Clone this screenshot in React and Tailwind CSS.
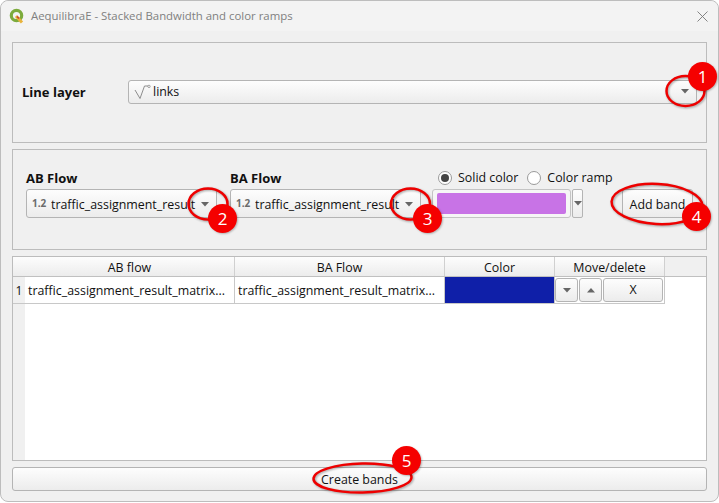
const font = "font-['Open_Sans','Liberation_Sans',sans-serif]";
const gradient = "bg-gradient-to-b from-[#fdfdfd] to-[#ececec]";

function Arrow({ up }) {
  return (
    <svg width="8" height="5" viewBox="0 0 8 5" className="shrink-0">
      <path d={up ? "M0 4.5L4 0L8 4.5Z" : "M0 0L8 0L4 4.5Z"} fill="#666" />
    </svg>
  );
}

function QgisLogo() {
  return (
    <svg width="16" height="16" viewBox="0 0 16 16">
      <circle cx="7.5" cy="7.5" r="5.2" fill="none" stroke="#7cab3c" strokeWidth="3.2" />
      <path d="M7 8L13 14.5" stroke="#e8b33a" strokeWidth="3" />
      <path d="M8 8.5l2 2" stroke="#c9402f" strokeWidth="1.6" />
    </svg>
  );
}

function CloseIcon() {
  return (
    <svg width="11" height="11" viewBox="0 0 11 11">
      <path d="M0.5 0.5L10.5 10.5M10.5 0.5L0.5 10.5" stroke="#777" strokeWidth="0.9" />
    </svg>
  );
}

function LineIcon() {
  return (
    <svg width="17" height="16" viewBox="0 0 17 16">
      <path d="M1 6L6 14.5L10.5 2L14 2" fill="none" stroke="#8d8d8d" strokeWidth="1" />
      <circle cx="15" cy="2.4" r="1.2" fill="none" stroke="#8d8d8d" strokeWidth="0.8" />
    </svg>
  );
}

function FieldCombo() {
  return (
    <div className={`w-[191px] h-[29px] flex items-center rounded-[3px] border border-[#b4b4b4] ${gradient}`}>
      <span className="ml-[5px] w-[19px] shrink-0 text-[10px] font-bold text-[#6b6b6b]">1.2</span>
      <span className="w-[147px] shrink-0 pt-[3px] overflow-hidden whitespace-nowrap text-[12.4px] text-[#111]">traffic_assignment_result</span>
      <span className="ml-[3px] pt-[1px]"><Arrow /></span>
    </div>
  );
}

function Radio({ checked, label }) {
  return (
    <label className="flex items-center gap-[6px] whitespace-nowrap">
      <span className="w-[14px] h-[14px] shrink-0 rounded-full border border-[#9a9a9a] bg-white flex items-center justify-center">
        {checked && <span className="w-[8px] h-[8px] rounded-full bg-[#444]" />}
      </span>
      <span className="text-[12.4px] text-[#111]">{label}</span>
    </label>
  );
}

function HeaderCell({ width, children }) {
  return (
    <div className={`${width} h-full pt-[3px] flex items-center justify-center border-r border-[#d0d0d0] text-[12.4px] text-[#111] ${gradient}`}>
      {children}
    </div>
  );
}

function SmallButton({ width, children }) {
  return (
    <div className={`${width} h-[24px] flex items-center justify-center rounded-[3px] border border-[#b4b4b4] ${gradient}`}>
      {children}
    </div>
  );
}

function Badge({ className, children }) {
  return (
    <div className={`absolute w-[29px] h-[29px] rounded-full bg-[#f50000] text-white text-[17px] flex items-center justify-center shadow-[1px_1px_2px_rgba(0,0,0,0.25)] ${className}`}>
      {children}
    </div>
  );
}

function Annotations() {
  const rings = [
    { cx: 685.5, cy: 91, rx: 19, ry: 15, rot: 0 },
    { cx: 208, cy: 204, rx: 19.5, ry: 15.5, rot: 0 },
    { cx: 410.5, cy: 204, rx: 19.5, ry: 15.5, rot: 0 },
    { cx: 657, cy: 204, rx: 45.5, ry: 20, rot: 3 },
    { cx: 362.5, cy: 478, rx: 49, ry: 14.5, rot: -1 },
  ];
  return (
    <svg width="719" height="503" className="absolute left-0 top-0 pointer-events-none drop-shadow-[1px_1px_1px_rgba(0,0,0,0.35)]">
      {rings.map((r, i) => (
        <ellipse
          key={i}
          cx={r.cx}
          cy={r.cy}
          rx={r.rx}
          ry={r.ry}
          transform={`rotate(${r.rot} ${r.cx} ${r.cy})`}
          fill="none"
          stroke="#ee0000"
          strokeWidth="2.5"
        />
      ))}
    </svg>
  );
}

export default function App() {
  return (
    <div className={`relative w-[719px] h-[503px] overflow-hidden bg-white ${font}`}>
      <div className="h-[502px] flex flex-col rounded-[8px] border border-[#bdbdbd] bg-[#f0f0f0]">
        {/* title bar */}
        <div className="h-[30px] shrink-0 flex items-center pl-[8px] pr-[10px] rounded-t-[8px] bg-[#f3f3f3]">
          <QgisLogo />
          <span className="ml-[6px] flex-1 text-[11.4px] text-[#808080]">AequilibraE - Stacked Bandwidth and color ramps</span>
          <CloseIcon />
        </div>

        <div className="flex-1 flex flex-col px-[11px] pt-[11px]">
          <div className="h-[101px] shrink-0 pb-[2px] flex items-center pl-[9px] pr-[9px] border border-[#bcbcbc]">
            <span className="w-[106px] pt-[2px] text-[13px] font-bold text-[#111]">Line layer</span>
            <div className={`flex-1 h-[24px] flex items-center rounded-[3px] border border-[#b4b4b4] ${gradient}`}>
              <span className="ml-[5px] mr-[2px]"><LineIcon /></span>
              <span className="flex-1 pt-[2px] text-[12.4px] text-[#111]">links</span>
              <span className="mr-[7px]"><Arrow /></span>
            </div>
          </div>

          <div className="h-[101px] shrink-0 mt-[6px] flex pl-[13px] pr-[13px] pt-[19px] border border-[#bcbcbc]">
            <div className="w-[204px] shrink-0">
              <div className="h-[20px] text-[13px] font-bold text-[#111]">AB Flow</div>
              <FieldCombo />
            </div>
            <div className="w-[202px] shrink-0">
              <div className="h-[20px] text-[13px] font-bold text-[#111]">BA Flow</div>
              <FieldCombo />
            </div>
            <div className="w-[151px] shrink-0 -mt-[9px]">
              <div className="h-[29px] pt-[7px] flex items-center gap-[9px] pl-[6px]">
                <Radio checked label="Solid color" />
                <Radio label="Color ramp" />
              </div>
              <div className="flex">
                <div className="w-[139px] h-[29px] py-[3px] px-[4px] rounded-[3px] border border-[#c4c4c4] bg-[#f6f6f6]">
                  <div className="h-full rounded-[2px] bg-[#c873e6]" />
                </div>
                <div className={`ml-[1px] w-[11px] h-[29px] flex items-center justify-center rounded-[2px] border border-[#b4b4b4] ${gradient}`}>
                  <Arrow />
                </div>
              </div>
            </div>
            <div className={`ml-[39px] mt-[20px] w-[72px] h-[29px] pt-[3px] flex items-center justify-center rounded-[3px] border border-[#b4b4b4] text-[12.4px] text-[#111] ${gradient}`}>
              Add band
            </div>
          </div>

          {/* table */}
          <div className="h-[205px] shrink-0 mt-[6px] border border-[#bcbcbc] bg-white flex flex-col">
            <div className="h-[20px] shrink-0 flex border-b border-[#c0c0c0] bg-[#f0f0f0]">
              <div className={`w-[12px] h-full ${gradient}`} />
              <HeaderCell width="w-[210px]">AB flow</HeaderCell>
              <HeaderCell width="w-[210px]">BA Flow</HeaderCell>
              <HeaderCell width="w-[110px]">Color</HeaderCell>
              <HeaderCell width="w-[110px]">Move/delete</HeaderCell>
            </div>
            <div className="flex-1 flex">
              <div className="w-[12px] shrink-0 bg-[#f0f0f0]">
                <div className="h-[27px] pt-[2px] flex items-center justify-center border-b border-[#c8c8c8] text-[12px] text-[#111]">1</div>
              </div>
              <div className="flex h-[27px] border-b border-[#c8c8c8] text-[12.4px] text-[#111]">
                <div className="w-[210px] pt-[2px] flex items-center pl-[3px] border-r border-[#c8c8c8] whitespace-nowrap overflow-hidden">traffic_assignment_result_matrix...</div>
                <div className="w-[210px] pt-[2px] flex items-center pl-[3px] border-r border-[#c8c8c8] whitespace-nowrap overflow-hidden">traffic_assignment_result_matrix...</div>
                <div className="w-[110px] border-r border-[#c8c8c8] bg-[#0f1fa8]" />
                <div className="w-[110px] flex items-center gap-[1px] border-r border-[#c8c8c8]">
                  <SmallButton width="w-[23px]"><Arrow /></SmallButton>
                  <SmallButton width="w-[23px]"><Arrow up /></SmallButton>
                  <SmallButton width="w-[60px]">X</SmallButton>
                </div>
              </div>
            </div>
          </div>

          <div className={`h-[24px] shrink-0 mt-[6px] pt-[2px] flex items-center justify-center rounded-[3px] border border-[#b4b4b4] text-[12.4px] text-[#111] ${gradient}`}>
            Create bands
          </div>
        </div>
      </div>

      <Annotations />
      <Badge className="left-[688px] top-[62px]">1</Badge>
      <Badge className="left-[208px] top-[204px]">2</Badge>
      <Badge className="left-[413px] top-[204px]">3</Badge>
      <Badge className="left-[682px] top-[202px]">4</Badge>
      <Badge className="left-[392px] top-[446px]">5</Badge>
    </div>
  );
}
